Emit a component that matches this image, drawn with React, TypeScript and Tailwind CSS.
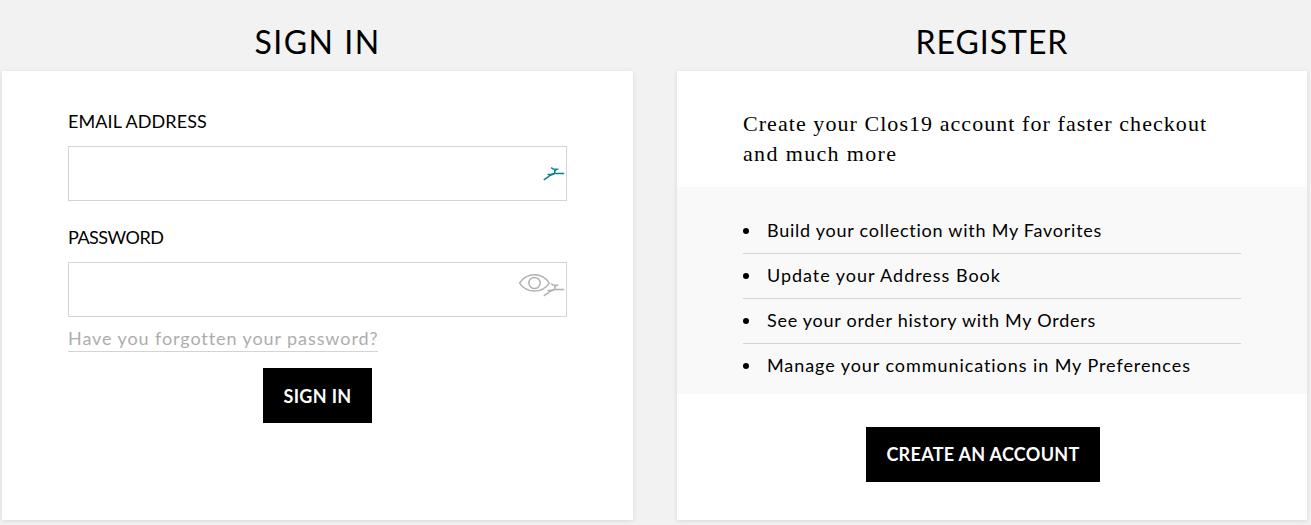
import type { ReactNode } from 'react';

const benefits = [
  { text: 'Build your collection with My Favorites', tracking: 'tracking-[0.75px]' },
  { text: 'Update your Address Book', tracking: 'tracking-[0.97px]' },
  { text: 'See your order history with My Orders', tracking: 'tracking-[0.73px]' },
  { text: 'Manage your communications in My Preferences', tracking: 'tracking-[0.93px]' },
];

function Panel({ title, width, tracking, children }: { title: string; width: string; tracking: string; children: ReactNode }) {
  return (
    <section className={width}>
      <h1 className="flex h-[71px] items-center justify-center pt-3 text-[32px] leading-none">
        <span className={tracking}>{title}</span>
      </h1>
      <div className="h-[449px] bg-white shadow-[0_1px_5px_rgba(0,0,0,0.11)]">{children}</div>
    </section>
  );
}

function BirdIcon() {
  return (
    <svg className="absolute right-0.5 top-5 h-4 w-[22px]" viewBox="0 0 22 16" fill="none" stroke="currentColor">
      <path d="M.8 13.9 6.3 10.2" strokeWidth="1.5" />
      <path d="M4.5 8.6 7.5 8.5 11.5 7.6 21.2 7.4M6 9.7 11.5 7.8" strokeWidth="1.5" />
      <path d="m8.2 1.6 2 1.5 3.6.2-2 1.2V7.5" strokeWidth="1.5" />
    </svg>
  );
}

function EyeIcon() {
  return (
    <svg className="absolute left-[450px] top-[11px] h-5 w-8" viewBox="0 0 32 20" fill="none" stroke="currentColor" strokeWidth="1.5">
      <path d="M1.5 10.1C9-1.1 24-1.1 31.4 10.1 24 20.7 9 20.7 1.5 10.1Z" />
      <circle cx="16.5" cy="10" r="5.6" />
    </svg>
  );
}

export default function App() {
  return (
    <main className="flex h-[525px] w-[1311px] gap-11 overflow-hidden bg-[#f2f2f2] pl-0.5 font-['Lato',sans-serif] text-black">
      <Panel title="SIGN IN" width="w-[631px]" tracking="tracking-[1.5px]">
        <form className="flex flex-col px-[66px] pt-[37px]">
          <label htmlFor="email" className="h-[38px] text-lg leading-[26px] tracking-[0.08px]">EMAIL ADDRESS</label>
          <div className="relative h-[55px] w-[499px] text-[#078095]">
            <input id="email" type="email" className="h-full w-full border border-[#d4d4d4] bg-white px-4 outline-none" />
            <BirdIcon />
          </div>
          <label htmlFor="password" className="mt-[23px] h-[38px] text-lg leading-[26px] tracking-[-0.5px]">PASSWORD</label>
          <div className="relative h-[55px] w-[499px] text-[#b1b1b1]">
            <input id="password" type="password" className="h-full w-full border border-[#d4d4d4] bg-white px-4 outline-none" />
            <EyeIcon />
            <BirdIcon />
          </div>
          <a href="#" className="mt-[9px] h-[26px] w-[310px] whitespace-nowrap border-b border-[#d4d4d4] text-lg leading-6 tracking-[0.91px] text-[#adadad]">
            Have you forgotten your password?
          </a>
          <button type="button" className="mt-4 h-[55px] w-[109px] self-center whitespace-nowrap bg-black text-lg font-bold tracking-[0.35px] text-white">SIGN IN</button>
        </form>
      </Panel>
      <Panel title="REGISTER" width="w-[630px]" tracking="tracking-[0.95px]">
        <p className="h-[116px] whitespace-nowrap px-[66px] pt-[38px] font-['Liberation_Serif',serif] text-[22px] leading-[30px]">
          <span className="tracking-[1.06px]">Create your Clos19 account for faster checkout</span>
          <br />
          <span className="tracking-[1.35px]">and much more</span>
        </p>
        <ul className="h-[207px] bg-[#f9f9f9] px-[66px] pt-[22px]">
          {benefits.map(({ text, tracking }) => (
            <li key={text} className="flex h-[45px] items-center gap-[18px] whitespace-nowrap border-b border-[#d4d4d4] text-lg last:border-transparent">
              <span className="size-1.5 rounded-full bg-black" />
              <span className={`pb-0.5 ${tracking}`}>{text}</span>
            </li>
          ))}
        </ul>
        <div className="flex justify-center pt-[33px]">
          <button type="button" className="mr-[18px] h-[55px] w-[234px] whitespace-nowrap bg-black pb-0.5 text-lg font-bold tracking-[0.3px] text-white">CREATE AN ACCOUNT</button>
        </div>
      </Panel>
    </main>
  );
}
